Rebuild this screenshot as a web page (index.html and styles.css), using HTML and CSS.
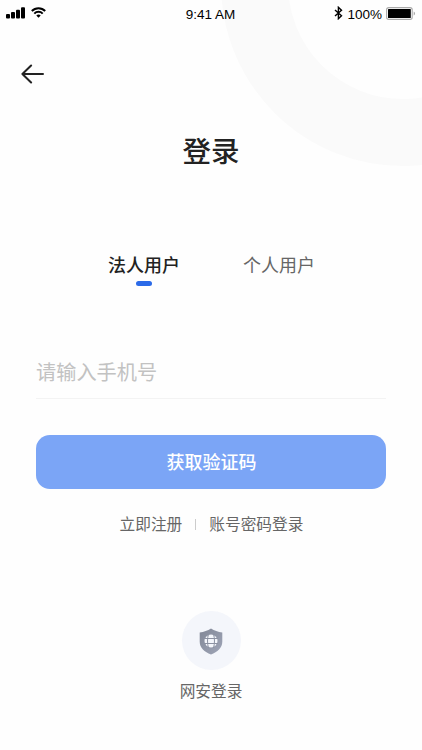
FILE: index.html
```html
<!DOCTYPE html>
<html lang="zh-CN">
<head>
    <meta charset="UTF-8">
    <meta name="viewport" content="width=device-width, initial-scale=1.0">
    <title>登录</title>
    <link rel="stylesheet" href="styles.css">
</head>
<body>
    <div class="page">
        <div class="ring"></div>

        <div class="status-bar">
            <div class="status-left">
                <svg class="signal" width="19" height="12" viewBox="0 0 19 12">
                    <rect x="0" y="7" width="4" height="4.6" rx="1"/>
                    <rect x="5" y="5" width="4" height="6.6" rx="1"/>
                    <rect x="10" y="2.8" width="4" height="8.8" rx="1"/>
                    <rect x="15" y="0.3" width="4" height="11.3" rx="1"/>
                </svg>
                <svg class="wifi" width="15" height="11" viewBox="0 0 15 11">
                    <path d="M.8 4a9.4 9.4 0 0 1 13.4 0M3.3 6.6a5.9 5.9 0 0 1 8.4 0" fill="none" stroke="#000" stroke-width="2"/>
                    <path d="M5.3 8.5a3.1 3.1 0 0 1 4.4 0L7.5 10.8z"/>
                </svg>
            </div>
            <div class="time">9:41 AM</div>
            <div class="status-right">
                <svg class="bluetooth" width="9" height="14" viewBox="0 0 9 14">
                    <path d="M1 3.9l6.5 5.9-3.1 2.9V1.3l3.1 2.9L1 10.1" fill="none" stroke="#000" stroke-width="1.4"/>
                </svg>
                <span class="percent">100%</span>
                <svg class="battery" width="30" height="13" viewBox="0 0 30 13">
                    <rect x="0.6" y="0.6" width="25.6" height="11.8" rx="2.2" fill="#fff" stroke="#aaa" stroke-width="1.1"/>
                    <rect x="2" y="2" width="22.8" height="9" rx="0.6"/>
                    <path d="M27.7 4.5c1.8.6 1.8 3.4 0 4z" fill="#aaa"/>
                </svg>
            </div>
        </div>

        <a class="back" href="#">
            <svg width="24" height="20" viewBox="0 0 24 20">
                <path d="M22 10H1.4M10.1 1.5L1.4 10l8.7 8.5" fill="none" stroke="#222" stroke-width="2" stroke-linecap="round" stroke-linejoin="round"/>
            </svg>
        </a>

        <h1>登录</h1>

        <div class="tabs">
            <div class="tab active">法人用户</div>
            <div class="tab">个人用户</div>
        </div>

        <form class="login-form">
            <input type="tel" class="phone" placeholder="请输入手机号">
            <button type="button">获取验证码</button>
        </form>

        <div class="links">
            <a href="#">立即注册</a>
            <span class="divider"></span>
            <a href="#">账号密码登录</a>
        </div>

        <div class="other-login">
            <div class="shield">
                <svg width="24" height="27" viewBox="0 0 24 27">
                    <defs>
                        <linearGradient id="shieldFill" x1="0" y1="0" x2="1" y2="1">
                            <stop offset="0" stop-color="#818796"/>
                            <stop offset="1" stop-color="#a0a6b8"/>
                        </linearGradient>
                    </defs>
                    <path d="M12 .5c3.3 2.2 7 3.4 11.3 4v9.2c0 6-4.8 10.3-11.3 12.8C5.5 24 .7 19.7.7 13.7V4.500C5 3.900 8.700 2.700 12 .5z" fill="url(#shieldFill)"/>
                    <circle cx="12" cy="13" r="6.5" fill="#f4f6fb"/>
                    <path d="M5 10.5h14M5 15.5h14M9.5 6c-1.3 4-1.3 10 0 14M14.5 6c1.3 4 1.3 10 0 14" fill="none" stroke="#8c92a2" stroke-width="1"/>
                </svg>
            </div>
            <span>网安登录</span>
        </div>
    </div>
</body>
</html>
```

FILE: styles.css
```css
* {
    box-sizing: border-box;
    margin: 0;
    padding: 0;
}

body {
    font-family: "Noto Sans CJK SC", sans-serif;
    background-color: #fefefe;
    color: #222;
}

a {
    color: inherit;
    text-decoration: none;
}

svg {
    display: block;
}

.page {
    position: relative;
    display: flex;
    flex-direction: column;
    height: 750px;
    overflow: hidden;
}

/* decorative ring behind the header */
.ring {
    position: absolute;
    top: -198px;
    left: 221px;
    width: 364px;
    height: 364px;
    border: 67px solid #fafafa;
    border-radius: 50%;
    z-index: -1;
}

.status-bar {
    display: grid;
    grid-template-columns: 1fr auto 1fr;
    align-items: center;
    height: 27px;
    padding: 0 7px 0 6px;
    font-family: "Liberation Sans", Arial, sans-serif;
    font-size: 13.5px;
    color: #000;
}

.status-left,
.status-right {
    display: flex;
    align-items: center;
}

.signal {
    margin-top: -1px;
}

.wifi {
    margin: -2px 0 0 6px;
}

.time {
    padding-top: 1px;
}

.status-right {
    justify-content: flex-end;
}

.bluetooth {
    margin-top: -1px;
}

.percent {
    margin: 0 4px;
    padding-top: 1px;
}

.battery {
    margin-right: -1px;
}

.back {
    width: 24px;
    margin: 37px 0 0 21px;
}

h1 {
    margin-top: 45px;
    text-align: center;
    font-size: 28.5px;
    font-weight: 500;
    line-height: 42px;
}

.tabs {
    display: flex;
    justify-content: center;
    gap: 63px;
    margin-top: 79px;
    padding-left: 1px;
}

.tab {
    font-size: 18px;
    line-height: 28px;
    color: #666;
}

.tab.active {
    font-weight: 500;
    color: #222;
}

.tab.active::after {
    content: "";
    display: block;
    width: 16px;
    height: 5px;
    margin: 3px auto 0;
    border-radius: 3px;
    background-color: #2b6ae8;
}

.login-form {
    margin: 60px 36px 0;
}

.phone {
    display: block;
    width: 100%;
    height: 53px;
    padding-bottom: 2px;
    border: none;
    border-bottom: 1px solid #f3f3f3;
    outline: none;
    background: transparent;
    font-family: inherit;
    font-size: 20.2px;
}

.phone::placeholder {
    color: #c2c2c2;
}

button {
    display: block;
    width: 100%;
    height: 54px;
    margin-top: 36px;
    padding: 0 0 2px 1px;
    border: none;
    border-radius: 14px;
    background-color: #7ba5f6;
    color: #fff;
    font-family: inherit;
    font-size: 18px;
    font-weight: 500;
}

.links {
    display: flex;
    justify-content: center;
    align-items: center;
    margin-top: 23px;
    padding-left: 1px;
    font-size: 15.7px;
    line-height: 24px;
    color: #666;
}

.divider {
    width: 1px;
    height: 11px;
    margin: 0 13px;
    background-color: #ccc;
}

.other-login {
    display: flex;
    flex-direction: column;
    align-items: center;
    margin-top: 75px;
    font-size: 15.7px;
    line-height: 24px;
    color: #666;
}

.shield {
    display: flex;
    justify-content: center;
    align-items: center;
    width: 59px;
    height: 59px;
    margin-bottom: 9px;
    padding-top: 1px;
    border-radius: 50%;
    background-color: #f4f6fb;
}
```
